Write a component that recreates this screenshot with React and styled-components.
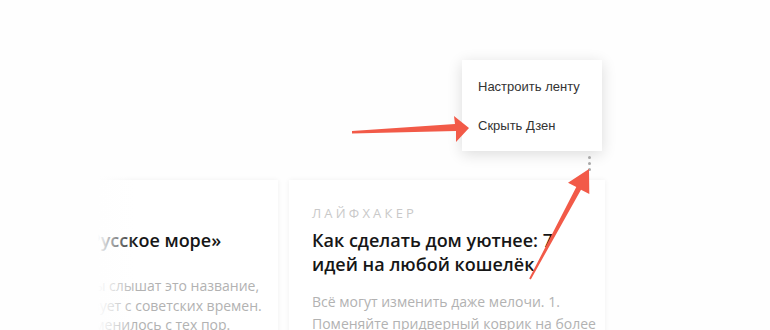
import React from "react";
import styled, { createGlobalStyle } from "styled-components";

const GlobalStyle = createGlobalStyle`
  html, body {
    margin: 0;
    padding: 0;
    background: #fefefe;
  }
`;

const Page = styled.div`
  position: relative;
  width: 770px;
  height: 330px;
  overflow: hidden;
  background: #fefefe;
  font-family: "Open Sans", "Liberation Sans", sans-serif;
`;

const Feed = styled.div`
  display: flex;
  gap: 11px;
  margin-left: -38px;
  padding-top: 180px;
`;

const Card = styled.div`
  flex: none;
  width: 316px;
  height: 220px;
  box-sizing: border-box;
  padding: 25px 20px 0 ${(p) => p.$padLeft || 23}px;
  background: #fff;
  box-shadow: 0 0 5px rgba(0, 0, 0, 0.06);
  overflow: hidden;
`;

const Source = styled.div`
  font-size: 13px;
  line-height: 16px;
  letter-spacing: 3.2px;
  color: #c9c9c9;
  text-transform: uppercase;
`;

const Title = styled.div`
  margin-top: 7px;
  font-size: 18px;
  line-height: 24px;
  font-weight: 600;
  color: #161616;
  white-space: nowrap;
`;

const Text = styled.div`
  margin-top: ${(p) => p.$gap}px;
  margin-left: ${(p) => p.$shift || 0}px;
  font-size: 14px;
  line-height: ${(p) => p.$lh}px;
  color: #b2b2b2;
  white-space: nowrap;
`;

const Fade = styled.div`
  position: absolute;
  left: 0;
  top: 160px;
  width: 135px;
  height: 170px;
  background: linear-gradient(
    to right,
    #fefefe 0,
    #fefefe 98px,
    rgba(254, 254, 254, 0) 135px
  );
`;

const Menu = styled.div`
  position: absolute;
  left: 462px;
  top: 60px;
  width: 140px;
  padding: 7px 0 6px;
  background: #fff;
  box-shadow: 0 3px 14px rgba(0, 0, 0, 0.14);
  font-family: "Liberation Sans", Arial, sans-serif;
`;

const MenuItem = styled.div`
  height: 39px;
  display: flex;
  align-items: center;
  padding-left: 16px;
  font-size: 13px;
  color: #333;
`;

const More = styled.div`
  position: absolute;
  left: 588px;
  top: 156px;
  display: flex;
  flex-direction: column;
  gap: 3px;

  span {
    width: 3px;
    height: 3px;
    border-radius: 50%;
    background: #a8a8a8;
  }
`;

const Arrows = styled.svg`
  position: absolute;
  left: 0;
  top: 0;
  pointer-events: none;
`;

export default function App() {
  return (
    <>
      <GlobalStyle />
      <Page>
        <Feed>
          <Card $padLeft={24}>
            <Source>Культура</Source>
            <Title>Что такое «Русское море»</Title>
            <Text $gap={24} $lh={19.5} $shift={8}>
              Многие туристы слышат это название,
              <br />
              но оно существует с советских времен.
              <br />
              Узнаем, что изменилось с тех пор.
            </Text>
          </Card>
          <Card>
            <Source>Лайфхакер</Source>
            <Title>
              Как сделать дом уютнее: 7
              <br />
              идей на любой кошелёк
            </Title>
            <Text $gap={15} $lh={22}>
              Всё могут изменить даже мелочи. 1.
              <br />
              Поменяйте придверный коврик на более
            </Text>
          </Card>
        </Feed>
        <Fade />
        <Menu>
          <MenuItem>Настроить ленту</MenuItem>
          <MenuItem>Скрыть Дзен</MenuItem>
        </Menu>
        <More>
          <span />
          <span />
          <span />
        </More>
        <Arrows width="770" height="330" viewBox="0 0 770 330">
          <polygon
            fill="#f25a48"
            points="352,131 455,124 454,116 469,128 456,142 456,131 352,133.5"
          />
          <polygon
            fill="#f25a48"
            points="529.2,278.6 576.3,187.1 568,182.8 589,169 589.3,194 581,189.7 530.8,279.4"
          />
        </Arrows>
      </Page>
    </>
  );
}
